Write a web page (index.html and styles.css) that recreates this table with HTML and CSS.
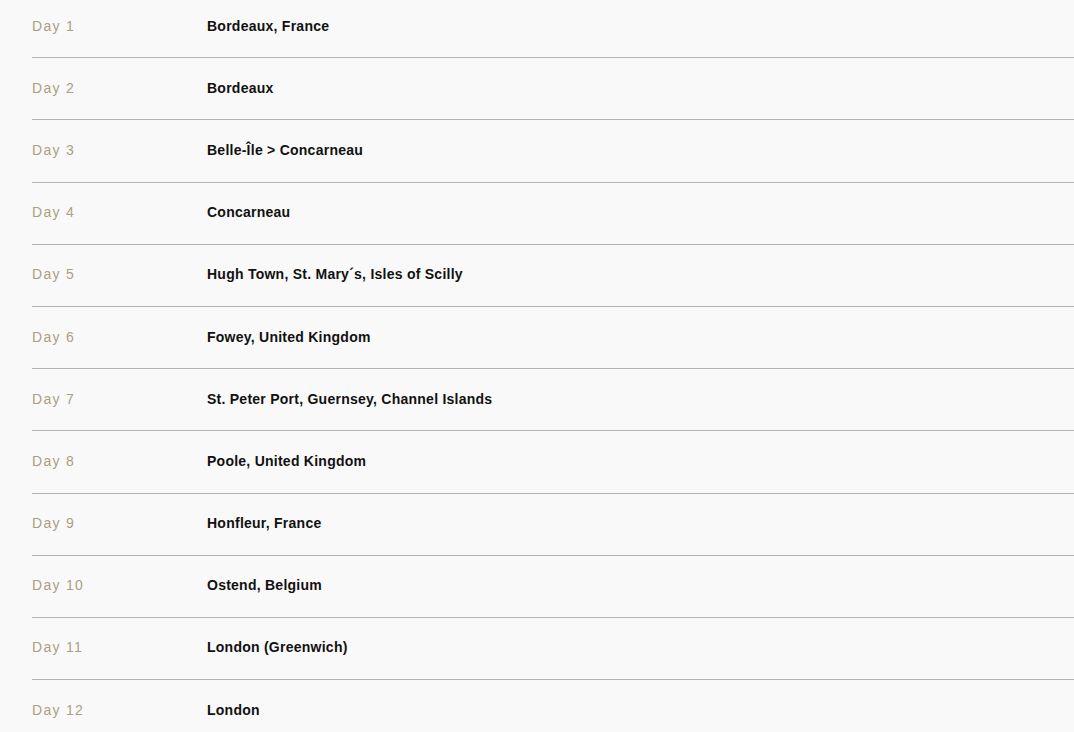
FILE: index.html
```html
<!DOCTYPE html>
<html lang="en">
<head>
<meta charset="utf-8">
<link rel="stylesheet" href="styles.css">
</head>
<body>
<ul class="itinerary">
  <li class="row"><span class="day">Day 1</span><span class="place">Bordeaux, France</span></li>
  <li class="row"><span class="day">Day 2</span><span class="place">Bordeaux</span></li>
  <li class="row"><span class="day">Day 3</span><span class="place">Belle-Île &gt; Concarneau</span></li>
  <li class="row"><span class="day">Day 4</span><span class="place">Concarneau</span></li>
  <li class="row"><span class="day">Day 5</span><span class="place">Hugh Town, St. Mary´s, Isles of Scilly</span></li>
  <li class="row"><span class="day">Day 6</span><span class="place">Fowey, United Kingdom</span></li>
  <li class="row"><span class="day">Day 7</span><span class="place">St. Peter Port, Guernsey, Channel Islands</span></li>
  <li class="row"><span class="day">Day 8</span><span class="place">Poole, United Kingdom</span></li>
  <li class="row"><span class="day">Day 9</span><span class="place">Honfleur, France</span></li>
  <li class="row"><span class="day">Day 10</span><span class="place">Ostend, Belgium</span></li>
  <li class="row"><span class="day">Day 11</span><span class="place">London (Greenwich)</span></li>
  <li class="row"><span class="day">Day 12</span><span class="place">London</span></li>
</ul>
</body>
</html>
```
FILE: styles.css
```css
html, body {
  margin: 0;
  padding: 0;
  background: #f9f9f9;
}
body {
  font-family: "Liberation Sans", Arial, sans-serif;
  overflow: hidden;
}
.itinerary {
  list-style: none;
  margin: -4px 0 0 32px;
  padding: 0;
}
.row {
  display: flex;
  align-items: center;
  height: 59.2px;
  padding-bottom: 2px;
  border-bottom: 1px solid #b3b3b3;
}
.day {
  width: 175px;
  flex: none;
  font-size: 14px;
  letter-spacing: 1.3px;
  color: #ab9f81;
  line-height: 20px;
}
.place {
  font-size: 14px;
  font-weight: 700;
  letter-spacing: 0.25px;
  color: #111;
  line-height: 20px;
}
```
